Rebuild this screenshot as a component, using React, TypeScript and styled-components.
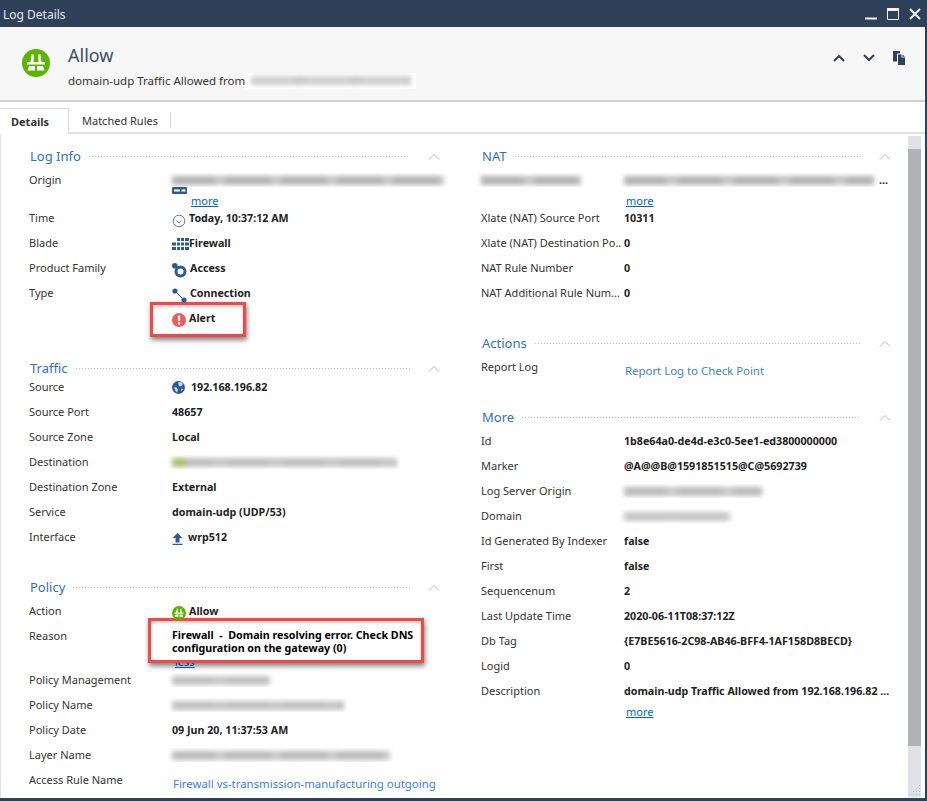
import React from 'react'
import styled, { createGlobalStyle } from 'styled-components'

const GlobalStyle = createGlobalStyle`
  html, body { margin: 0; padding: 0; background: #fff; }
  body { font-family: "Noto Sans", "Liberation Sans", sans-serif; font-size: 11px; color: #222; }
`

const AllowIcon = ({ size = 28 }: { size?: number }) => (
  <svg width={size} height={size} viewBox="0 0 28 28">
    <circle cx="14" cy="14" r="14" fill="#5cb400" />
    <path d="M9.500 5.500H12l-.5 7.500H8.500zM16 5.500h2.500l1 7.500h-3zM5 13h18v2.500H5zM7 17h6v4.500H5.500zM15 17h6l1.500 4.500H15z" fill="#fff" />
  </svg>
)
const GatewayIcon = () => (
  <svg width="15" height="7" viewBox="0 0 15 7">
    <path d="M1 0h13a1 1 0 0 1 1 1v5a1 1 0 0 1-1 1H1a1 1 0 0 1-1-1V1a1 1 0 0 1 1-1z" fill="#2a5a9a" />
    <path d="M2 2.500h6v2H2zM9.500 2.500h4v2h-4z" fill="#fff" />
  </svg>
)
const ClockIcon = () => (
  <svg width="14" height="14" viewBox="0 0 14 14" fill="none">
    <circle cx="7" cy="7" r="5.800" stroke="#5d80ad" />
    <path d="M4.500 6.500 7 9l2.500-2.500" stroke="#5d80ad" />
  </svg>
)
const FirewallIcon = () => (
  <svg width="17" height="12" viewBox="0 0 17 12" fill="#2a5a9a">
    <path d="M5 0h3v3H5zM9 0h3v3H9zM13 0h4v3h-4zM0 4.500h4v3H0zM5 4.500h3v3H5zM9 4.500h3v3H9zM13 4.500h4v3h-4zM0 9h4v3H0zM5 9h3v3H5zM9 9h3v3H9zM13 9h4v3h-4z" />
  </svg>
)
const AccessIcon = () => (
  <svg width="15" height="15" viewBox="0 0 15 15" fill="none">
    <circle cx="8.500" cy="8.500" r="4.500" stroke="#2a5a9a" strokeWidth="3" />
    <circle cx="2.800" cy="2.800" r="2.800" fill="#2a5a9a" />
  </svg>
)
const ConnectionIcon = () => (
  <svg width="15" height="15" viewBox="0 0 15 15" fill="none">
    <path d="M3 3l9 9" stroke="#2a5a9a" />
    <circle cx="3" cy="3" r="2.600" fill="#2a5a9a" />
    <circle cx="12" cy="12" r="2.600" fill="#2a5a9a" />
  </svg>
)
const AlertIcon = () => (
  <svg width="14" height="14" viewBox="0 0 14 14">
    <circle cx="7" cy="7" r="7" fill="#ee5d5d" />
    <path d="M5.900 2.500h2.200v5.500H5.900zM5.900 9.200h2.200v2.200H5.900z" fill="#fff" />
  </svg>
)
const GlobeIcon = () => (
  <svg width="13" height="13" viewBox="0 0 13 13">
    <circle cx="6.500" cy="6.500" r="6.500" fill="#2a5a9a" />
    <path d="M6 1.500 9 1l2 2-1.500 2-2 .5-1-2zM2 6l2.500.5 1.500 2-1 3-1.500-1.500zM9.500 7.500l1.500.5-1 2-1-.5z" fill="#c9d8ea" />
  </svg>
)
const UploadIcon = () => (
  <svg width="11" height="12" viewBox="0 0 11 12" fill="#2a5a9a">
    <path d="M5.500 0 10.500 5H7.500v4.500h-4V5H.5zM.5 10.800h10V12H.5z" />
  </svg>
)
const GripIcon = () => (
  <svg width="13" height="12" viewBox="0 0 13 12" fill="#b9bdc2">
    <path d="M11 0h1v1h-1zM8 3h1v1H8zM11 3h1v1h-1zM5 6h1v1H5zM8 6h1v1H8zM11 6h1v1h-1zM2 9h1v1H2zM5 9h1v1H5zM8 9h1v1H8zM11 9h1v1h-1z" />
  </svg>
)

const Window = styled.div`
  width: 927px;
  height: 801px;
  overflow: hidden;
  display: flex;
  flex-direction: column;
  background: #2e4159;
`
const TitleBar = styled.div`
  height: 27px;
  flex: none;
  display: flex;
  align-items: center;
  justify-content: space-between;
  padding: 1px 6px 0 3px;
  box-sizing: border-box;
  color: #e3e8ee;
  font-size: 12px;
`
const WindowButtons = styled.div`
  display: flex;
  align-items: center;
  gap: 10px;
`
const Shell = styled.div`
  flex: none;
  height: 771px;
  margin-right: 2px;
  background: #fff;
  display: flex;
  flex-direction: column;
`
const Header = styled.header`
  height: 73px;
  flex: none;
  box-sizing: content-box;
  background: #f7f7f7;
  border-bottom: 2px solid #d0d0d0;
  display: flex;
  align-items: flex-start;
  padding-left: 22px;
  padding-right: 20px;
`
const HeaderIcon = styled.div`
  margin-top: 22px;
  width: 46px;
  flex: none;
`
const HeaderText = styled.div`
  flex: 1;
  padding-top: 16px;
`
const HeaderTitle = styled.div`
  font-size: 18px;
  line-height: 24px;
  color: #3c4e6c;
`
const HeaderSub = styled.div`
  display: flex;
  align-items: center;
  font-size: 11.5px;
  line-height: 16px;
  margin-top: 6px;
  color: #333;
`
const HeaderActions = styled.div`
  display: flex;
  align-items: center;
  gap: 18px;
  padding-top: 24px;
`
const Tabs = styled.nav`
  height: 32px;
  flex: none;
  display: flex;
  align-items: flex-end;
  box-sizing: border-box;
  border-bottom: 2px solid #e0e0e0;
`
const ActiveTab = styled.div`
  width: 69px;
  height: 26px;
  margin-bottom: -2px;
  box-sizing: border-box;
  background: #fff;
  border: 1px solid #dcdcdc;
  border-bottom: none;
  border-left: none;
  padding: 5px 0 0 11px;
  font-weight: 700;
  color: #333;
`
const Tab = styled.div`
  height: 16px;
  margin-bottom: 4px;
  padding: 0 12px 0 13px;
  border-right: 1px solid #d4d4d4;
  line-height: 18px;
  color: #333;
`
const Body = styled.div`
  flex: 1;
  min-height: 0;
  display: flex;
  overflow: hidden;
  border-left: 1px solid #dfe2e7;
`
const Column = styled.div<{ $left?: boolean }>`
  flex: none;
  width: ${(p) => (p.$left ? '463px' : '444px')};
  box-sizing: border-box;
  padding: 11px ${(p) => (p.$left ? '24px' : '17px')} 0 ${(p) => (p.$left ? '28px' : '17px')};
`
const Section = styled.section<{ $gap?: number }>`
  margin-top: ${(p) => p.$gap ?? 0}px;
`
const SectionHead = styled.div<{ $tight?: boolean }>`
  height: 20px;
  box-sizing: border-box;
  padding-top: ${(p) => (p.$tight ? 0 : 2)}px;
  display: flex;
  align-items: center;
  margin-bottom: ${(p) => (p.$tight ? 2 : 8)}px;
`
const SectionTitle = styled.h3`
  margin: 0 8px 0 1px;
  font-size: 13px;
  font-weight: 400;
  color: #2f6fc4;
`
const Dots = styled.div`
  flex: 1;
  height: 1px;
  background: linear-gradient(to right, #bdbdbd 1px, transparent 1px) 0 0 / 3px 1px repeat-x;
  margin-right: 18px;
`
const Row = styled.div`
  display: grid;
  grid-template-columns: 143px 1fr;
  line-height: 14px;
  padding-bottom: 11px;
`
const Label = styled.div`
  color: #333;
  white-space: nowrap;
`
const Value = styled.div`
  position: relative;
  font-size: 10.7px;
  font-weight: 700;
  color: #222;
  white-space: nowrap;
  display: flex;
  flex-direction: column;
  align-items: flex-start;
`
const ValueLine = styled.div<{ $gap?: number }>`
  position: relative;
  z-index: 2;
  display: flex;
  align-items: flex-start;
  gap: ${(p) => p.$gap ?? 3}px;
  height: 14px;
`
const IconSlot = styled.span<{ $top?: number }>`
  display: block;
  line-height: 0;
  margin-top: ${(p) => p.$top ?? 1}px;
`
const ReasonText = styled.div`
  position: relative;
  z-index: 2;
  line-height: 13px;
  color: #000;
  white-space: pre-wrap;
  width: 245px;
`
const MoreLink = styled.a<{ $x?: number; $top?: number }>`
  display: block;
  font-size: 11px;
  font-weight: 400;
  color: #0066cc;
  text-decoration: underline;
  margin: ${(p) => p.$top ?? 0}px 0 -8px ${(p) => p.$x ?? 19}px;
  line-height: 14px;
`
const LessLink = styled(MoreLink)`
  margin: 1px 0 -6px 3px;
  line-height: 12px;
`
const Action = styled.a<{ $top?: number }>`
  font-weight: 400;
  font-size: 11.4px;
  color: #3a7fe0;
  margin: ${(p) => p.$top ?? 4}px 0 -4px 1px;
`
const Highlight = styled.div<{ $x: number; $y: number; $w: number; $h: number }>`
  position: absolute;
  z-index: 1;
  left: ${(p) => p.$x}px;
  top: ${(p) => p.$y}px;
  width: ${(p) => p.$w}px;
  height: ${(p) => p.$h}px;
  box-sizing: border-box;
  background: #fff;
  border: 3px solid #f24848;
  box-shadow: 1px 3px 5px rgba(0, 0, 0, 0.5), inset 0 2px 3px rgba(0, 0, 0, 0.2);
`
const BlurClip = styled.div<{ $w: number; $h?: number; $x?: number }>`
  width: ${(p) => p.$w}px;
  height: ${(p) => p.$h ?? 14}px;
  margin-left: ${(p) => p.$x ?? -5}px;
  flex: none;
  overflow: hidden;
  background: #fff;
  padding: 3px 5px;
  box-sizing: border-box;
`
const BlurBar = styled.div<{ $shade?: string; $accent?: boolean }>`
  height: 9px;
  background: ${(p) => (p.$accent ? 'linear-gradient(to right, #a9c06d 0 14px, transparent 14px),' : '')}
    repeating-linear-gradient(to right, ${(p) => p.$shade ?? '#b2b2b2'} 0 40px, #c8c8c8 46px 50px, ${(p) => p.$shade ?? '#b2b2b2'} 56px);
  filter: blur(2.5px);
`
const Scrollbar = styled.div`
  flex: none;
  width: 13px;
  margin-top: 2px;
  margin-bottom: 1px;
  background: #dfe2e7;
  padding: 13px 0 0;
  box-sizing: border-box;
  display: flex;
  flex-direction: column;
`
const ScrollThumb = styled.div`
  height: 597px;
  background: #b0b4b7;
`
const Grip = styled.div`
  margin-top: auto;
  line-height: 0;
`

type RowData = { label: string; value: React.ReactNode }

const Line = ({ icon, text, top, gap }: { icon?: React.ReactNode; text: string; top?: number; gap?: number }) => (
  <ValueLine $gap={gap}>
    {icon && <IconSlot $top={top}>{icon}</IconSlot>}
    {text}
  </ValueLine>
)

const Blur = ({ w, shade, accent }: { w: number; shade?: string; accent?: boolean }) => (
  <BlurClip $w={w}>
    <BlurBar $shade={shade} $accent={accent} />
  </BlurClip>
)

const Rows = ({ rows }: { rows: RowData[] }) => (
  <>
    {rows.map((r, i) => (
      <Row key={i}>
        <Label>{r.label}</Label>
        <Value>{r.value}</Value>
      </Row>
    ))}
  </>
)

const Head = ({ title, tight }: { title: string; tight?: boolean }) => (
  <SectionHead $tight={tight}>
    <SectionTitle>{title}</SectionTitle>
    <Dots />
    <svg width="12" height="7" viewBox="0 0 12 7" fill="none">
      <path d="M1 6.500 6 1.500l5 5" stroke="#b5b5b5" />
    </svg>
  </SectionHead>
)

const logInfo: RowData[] = [
  {
    label: 'Origin',
    value: (
      <>
        <Blur w={282} />
        <IconSlot $top={0}><GatewayIcon /></IconSlot>
        <MoreLink>more</MoreLink>
      </>
    ),
  },
  { label: 'Time', value: <Line icon={<ClockIcon />} text="Today, 10:37:12 AM" top={3} /> },
  { label: 'Blade', value: <Line icon={<FirewallIcon />} text="Firewall" top={2} gap={0} /> },
  { label: 'Product Family', value: <Line icon={<AccessIcon />} text="Access" top={2} /> },
  { label: 'Type', value: <Line icon={<ConnectionIcon />} text="Connection" top={2} /> },
  {
    label: '',
    value: (
      <>
        <Highlight $x={-22} $y={-9} $w={96} $h={35} />
        <Line icon={<AlertIcon />} text="Alert" top={2} />
      </>
    ),
  },
]

const traffic: RowData[] = [
  { label: 'Source', value: <Line icon={<GlobeIcon />} text="192.168.196.82" gap={6} /> },
  { label: 'Source Port', value: '48657' },
  { label: 'Source Zone', value: 'Local' },
  { label: 'Destination', value: <Blur w={235} shade="#bfbfbf" accent /> },
  { label: 'Destination Zone', value: 'External' },
  { label: 'Service', value: 'domain-udp (UDP/53)' },
  { label: 'Interface', value: <Line icon={<UploadIcon />} text="wrp512" top={3} gap={5} /> },
]

const policy: RowData[] = [
  { label: 'Action', value: <Line icon={<AllowIcon size={14} />} text="Allow" top={2} /> },
  {
    label: 'Reason',
    value: (
      <>
        <Highlight $x={-24} $y={-11} $w={276} $h={45} />
        <ReasonText>{'Firewall  -  Domain resolving error. Check DNS configuration on the gateway (0)'}</ReasonText>
        <LessLink>less</LessLink>
      </>
    ),
  },
  { label: 'Policy Management', value: <Blur w={108} shade="#c0c0c0" /> },
  { label: 'Policy Name', value: <Blur w={182} shade="#c0c0c0" /> },
  { label: 'Policy Date', value: '09 Jun 20, 11:37:53 AM' },
  { label: 'Layer Name', value: <Blur w={228} shade="#bababa" /> },
  { label: 'Access Rule Name', value: <Action>Firewall vs-transmission-manufacturing outgoing</Action> },
]

const natRows: RowData[] = [
  { label: 'Xlate (NAT) Source Port', value: '10311' },
  { label: 'Xlate (NAT) Destination Po..', value: '0' },
  { label: 'NAT Rule Number', value: '0' },
  { label: 'NAT Additional Rule Num...', value: '0' },
]

const moreRows: RowData[] = [
  { label: 'Id', value: '1b8e64a0-de4d-e3c0-5ee1-ed3800000000' },
  { label: 'Marker', value: '@A@@B@1591851515@C@5692739' },
  { label: 'Log Server Origin', value: <Blur w={148} shade="#bababa" /> },
  { label: 'Domain', value: <Blur w={116} shade="#c4c4c4" /> },
  { label: 'Id Generated By Indexer', value: 'false' },
  { label: 'First', value: 'false' },
  { label: 'Sequencenum', value: '2' },
  { label: 'Last Update Time', value: '2020-06-11T08:37:12Z' },
  { label: 'Db Tag', value: '{E7BE5616-2C98-AB46-BFF4-1AF158D8BECD}' },
  { label: 'Logid', value: '0' },
  {
    label: 'Description',
    value: (
      <>
        domain-udp Traffic Allowed from 192.168.196.82 ...
        <MoreLink $x={2} $top={7}>more</MoreLink>
      </>
    ),
  },
]

const App: React.FC = () => (
  <Window>
    <GlobalStyle />
    <TitleBar>
      Log Details
      <WindowButtons>
        <svg width="12" height="12" viewBox="0 0 12 12" fill="#f2f4f6"><path d="M0 9.500h12V11.500H0z" /></svg>
        <svg width="12" height="12" viewBox="0 0 12 12" fill="none" stroke="#f2f4f6"><path d="M.5 1.500h11v10H.5z" /><path d="M0 1.500h12" strokeWidth="3" /></svg>
        <svg width="12" height="12" viewBox="0 0 12 12" fill="none" stroke="#f2f4f6" strokeWidth="2"><path d="m1 1 10 10M11 1 1 11" /></svg>
      </WindowButtons>
    </TitleBar>
    <Shell>
      <Header>
        <HeaderIcon><AllowIcon /></HeaderIcon>
        <HeaderText>
          <HeaderTitle>Allow</HeaderTitle>
          <HeaderSub>
            domain-udp Traffic Allowed from
            <BlurClip $w={170} $h={16} $x={1}>
              <BlurBar $shade="#d0d0d0" />
            </BlurClip>
          </HeaderSub>
        </HeaderText>
        <HeaderActions>
          <svg width="12" height="8" viewBox="0 0 12 8" fill="none" stroke="#2e4159" strokeWidth="2"><path d="M1 7l5-5 5 5" /></svg>
          <svg width="12" height="8" viewBox="0 0 12 8" fill="none" stroke="#2e4159" strokeWidth="2"><path d="M1 1l5 5 5-5" /></svg>
          <svg width="12" height="14" viewBox="0 0 12 14" fill="#2e4159">
            <path d="M0 0h7v2.500H4v8H0z" />
            <path d="M5 3.500h3.500V6.500H12V14H5zM9.500 3.500 12 5.800H9.500z" />
          </svg>
        </HeaderActions>
      </Header>
      <Tabs>
        <ActiveTab>Details</ActiveTab>
        <Tab>Matched Rules</Tab>
      </Tabs>
      <Body>
        <Column $left>
          <Section>
            <Head title="Log Info" />
            <Rows rows={logInfo} />
          </Section>
          <Section $gap={22}>
            <Head title="Traffic" tight />
            <Rows rows={traffic} />
          </Section>
          <Section $gap={21}>
            <Head title="Policy" />
            <Rows rows={policy} />
          </Section>
        </Column>
        <Column>
          <Section>
            <Head title="NAT" />
            <Row>
              <Label><Blur w={110} /></Label>
              <Value>
                <ValueLine $gap={0}>
                  <Blur w={260} />
                  ...
                </ValueLine>
                <MoreLink $x={2} $top={7}>more</MoreLink>
              </Value>
            </Row>
            <Rows rows={natRows} />
          </Section>
          <Section $gap={21}>
            <Head title="Actions" />
            <Row>
              <Label>Report Log</Label>
              <Value><Action>Report Log to Check Point</Action></Value>
            </Row>
          </Section>
          <Section $gap={21}>
            <Head title="More" />
            <Rows rows={moreRows} />
          </Section>
        </Column>
        <Scrollbar>
          <ScrollThumb />
          <Grip><GripIcon /></Grip>
        </Scrollbar>
      </Body>
    </Shell>
  </Window>
)

export default App
